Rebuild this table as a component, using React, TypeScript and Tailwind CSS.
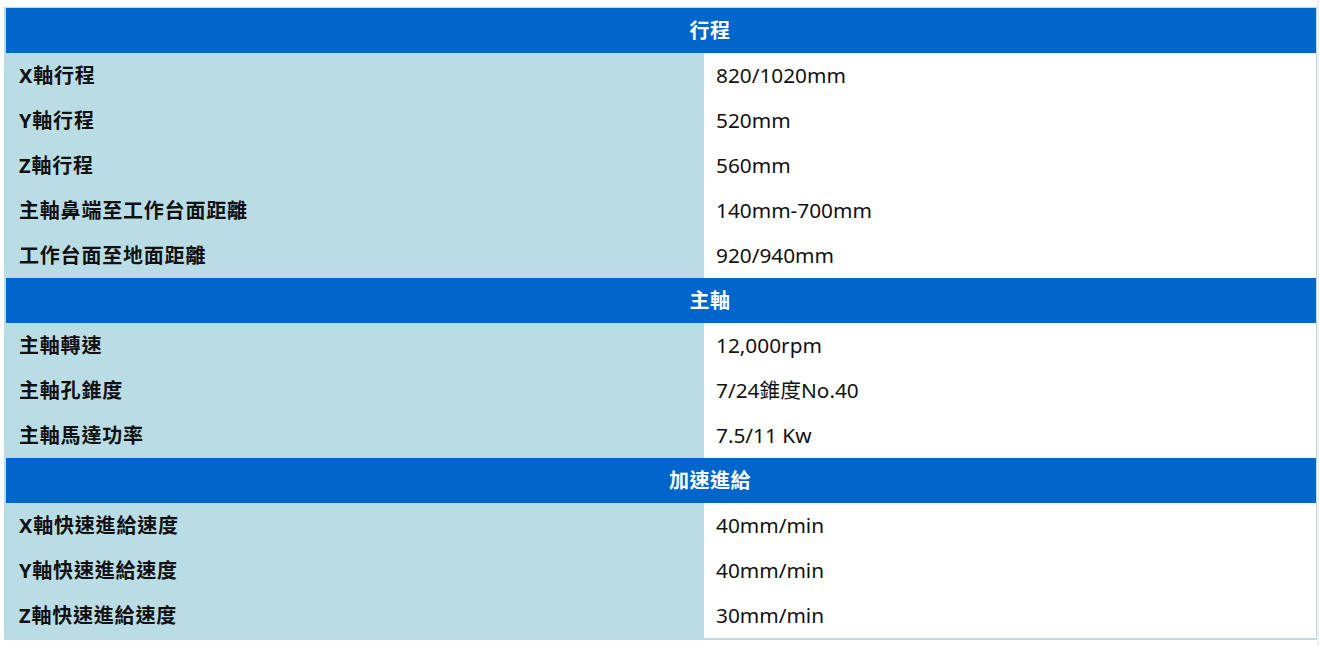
import React from "react";

type Row = { k: string; v: string };
type Section = { title: string; rows: Row[] };

const sections: Section[] = [
  {
    title: "行程",
    rows: [
      { k: "X軸行程", v: "820/1020mm" },
      { k: "Y軸行程", v: "520mm" },
      { k: "Z軸行程", v: "560mm" },
      { k: "主軸鼻端至工作台面距離", v: "140mm-700mm" },
      { k: "工作台面至地面距離", v: "920/940mm" },
    ],
  },
  {
    title: "主軸",
    rows: [
      { k: "主軸轉速", v: "12,000rpm" },
      { k: "主軸孔錐度", v: "7/24錐度No.40" },
      { k: "主軸馬達功率", v: "7.5/11 Kw" },
    ],
  },
  {
    title: "加速進給",
    rows: [
      { k: "X軸快速進給速度", v: "40mm/min" },
      { k: "Y軸快速進給速度", v: "40mm/min" },
      { k: "Z軸快速進給速度", v: "30mm/min" },
    ],
  },
];

export default function App() {
  return (
    <div
      className="relative w-[1319px] h-[646px] bg-white overflow-hidden"
      style={{ fontFamily: '"Noto Sans", "Noto Sans CJK TC", sans-serif' }}
    >
      <div className="flex h-full">
        <div className="flex-1 pt-[7px] pl-[4px]">
          <div className="bg-[#badce5] pt-[1px] pl-[2px] pr-[1px] pb-[2px]">
            {sections.map((s) => (
              <div key={s.title}>
                <div className="h-[45px] bg-[#0066cc] flex items-center justify-center pl-[98px] text-white font-bold text-[20px] tracking-[0.5px]">
                  {s.title}
                </div>
                {s.rows.map((r) => (
                  <div key={r.k} className="h-[45px] flex">
                    <div className="w-[698px] flex items-center pl-[13px] font-bold text-[20px] text-[#111] tracking-[0.8px]">
                      {r.k}
                    </div>
                    <div className="flex-1 bg-white flex items-center pl-[12px] text-[20.8px] text-[#111]">
                      {r.v}
                    </div>
                  </div>
                ))}
              </div>
            ))}
          </div>
        </div>
        <div className="w-[2px] h-full bg-[#f0f0f0]" />
      </div>
    </div>
  );
}
